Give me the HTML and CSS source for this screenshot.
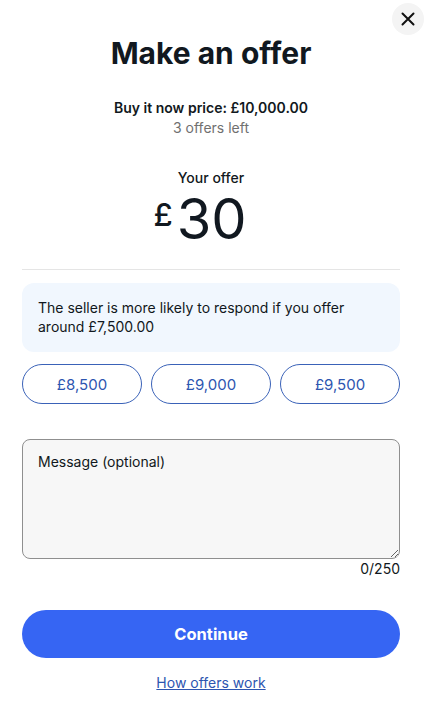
FILE: index.html
```html
<!DOCTYPE html>
<html lang="en">
<head>
<meta charset="utf-8">
<title>Make an offer</title>
<link rel="stylesheet" href="styles.css">
</head>
<body>
<div class="dialog">
  <button class="close" aria-label="Close">
    <svg width="16" height="16" viewBox="0 0 16 16"><path d="M2.5 2.5 L13.5 13.5 M13.5 2.5 L2.5 13.5" stroke="#111" stroke-width="2" stroke-linecap="round"/></svg>
  </button>
  <h1 class="title">Make an offer</h1>
  <div class="price">
    <div class="bin">Buy it now price: £10,000.00</div>
    <div class="left">3 offers left</div>
  </div>
  <div class="offer">
    <div class="offer-label">Your offer</div>
    <div class="amount"><span class="cur">£</span><span class="val">30</span></div>
  </div>
  <hr class="divider">
  <div class="hint">The seller is more likely to respond if you offer around £7,500.00</div>
  <div class="chips">
    <button class="chip">£8,500</button>
    <button class="chip">£9,000</button>
    <button class="chip">£9,500</button>
  </div>
  <div class="msg">
    <textarea class="textarea" placeholder="Message (optional)"></textarea>
    <div class="count">0/250</div>
  </div>
  <button class="continue">Continue</button>
  <a class="how" href="#">How offers work</a>
</div>
</body>
</html>
```
FILE: styles.css
```css
* { box-sizing: border-box; }
html, body { margin: 0; padding: 0; background: #fff; }
body { font-family: Inter, "Liberation Sans", Arial, sans-serif; color: #111820; }
.dialog {
  position: relative;
  width: 436px;
  height: 710px;
  padding: 0 36px 0 22px;
  display: flex;
  flex-direction: column;
}
.close {
  position: absolute;
  top: 3px;
  right: 12px;
  width: 32px;
  height: 32px;
  border-radius: 50%;
  border: none;
  background: #f4f4f4;
  display: flex;
  align-items: center;
  justify-content: center;
  padding: 0;
}
.title {
  margin: 36px 0 0;
  font-size: 30px;
  font-weight: 700;
  text-align: center;
  line-height: 34px;
}
.price { margin-top: 28px; text-align: center; font-size: 14px; line-height: 20px; }
.bin { font-weight: 600; color: #111820; }
.left { color: #707070; }
.offer { margin-top: 30px; text-align: center; }
.offer-label { font-size: 14px; line-height: 20px; font-weight: 500; }
.amount { display: flex; justify-content: center; align-items: flex-start; margin-top: 2px; height: 58px; padding-right: 22px; }
.cur { font-size: 31px; line-height: 32px; margin-right: 4px; margin-top: 9px; font-weight: 500; }
.val { font-size: 56px; line-height: 58px; }
.divider { margin: 21px 0 0; border: none; border-top: 1px solid #e5e5e5; }
.hint {
  margin-top: 13px;
  background: #f1f7fe;
  border-radius: 12px;
  padding: 15px 16px 16px;
  font-size: 14px;
  line-height: 19px;
}
.chips { margin-top: 12px; display: grid; grid-template-columns: repeat(3, 1fr); gap: 9px; }
.chip {
  height: 40px;
  border-radius: 20px;
  border: 1px solid #3a62b8;
  background: #fff;
  color: #2d55b0;
  font-family: inherit;
  font-size: 15px;
}
.msg { margin-top: 35px; }
.textarea {
  display: block;
  width: 100%;
  height: 120px;
  border: 1px solid #8f8f8f;
  border-radius: 8px;
  background: #f7f7f7;
  padding: 13px 15px;
  font-family: inherit;
  font-size: 14px;
  resize: vertical;
}
.textarea::placeholder { color: #111820; }
.count { text-align: right; font-size: 14px; line-height: 20px; color: #111820; }
.continue {
  margin-top: 31px;
  height: 48px;
  border-radius: 24px;
  border: none;
  background: #3665f3;
  color: #fff;
  font-family: inherit;
  font-size: 16.5px;
  font-weight: 700;
}
.how {
  margin-top: 15px;
  align-self: center;
  color: #2d55b0;
  font-size: 14px;
  line-height: 20px;
}
```
